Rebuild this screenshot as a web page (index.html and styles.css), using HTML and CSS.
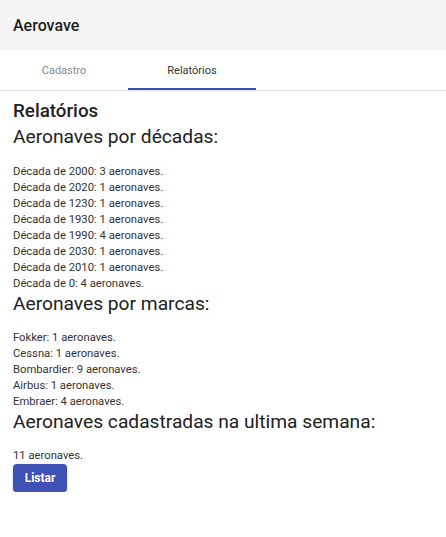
FILE: index.html
```html
<!DOCTYPE html>
<html lang="pt">
<head>
<meta charset="utf-8">
<title>Aerovave</title>
<link rel="stylesheet" href="styles.css">
</head>
<body>
<header class="topbar"><span class="brand">Aerovave</span></header>
<nav class="tabs">
  <div class="tab">Cadastro</div>
  <div class="tab active">Relatórios</div>
</nav>
<main class="content">
  <h1 class="title">Relatórios</h1>
  <h2 class="section">Aeronaves por décadas:</h2>
  <div class="list">
    <p>Década de 2000: 3 aeronaves.</p>
    <p>Década de 2020: 1 aeronaves.</p>
    <p>Década de 1230: 1 aeronaves.</p>
    <p>Década de 1930: 1 aeronaves.</p>
    <p>Década de 1990: 4 aeronaves.</p>
    <p>Década de 2030: 1 aeronaves.</p>
    <p>Década de 2010: 1 aeronaves.</p>
    <p>Década de 0: 4 aeronaves.</p>
  </div>
  <h2 class="section">Aeronaves por marcas:</h2>
  <div class="list">
    <p>Fokker: 1 aeronaves.</p>
    <p>Cessna: 1 aeronaves.</p>
    <p>Bombardier: 9 aeronaves.</p>
    <p>Airbus: 1 aeronaves.</p>
    <p>Embraer: 4 aeronaves.</p>
  </div>
  <h2 class="section">Aeronaves cadastradas na ultima semana:</h2>
  <div class="list">
    <p>11 aeronaves.</p>
  </div>
  <button class="btn">Listar</button>
</main>
</body>
</html>
```
FILE: styles.css
```css
html, body {
  margin: 0;
  padding: 0;
  background: #fff;
  font-family: Roboto, "Noto Sans", sans-serif;
  color: #212121;
}
.topbar {
  height: 50px;
  background: #f5f5f5;
  display: flex;
  align-items: center;
  padding-left: 13px;
}
.brand {
  font-size: 16px;
  font-weight: 500;
  color: #212121;
}
.tabs {
  display: flex;
  height: 40px;
  border-bottom: 1px solid #e0e0e0;
}
.tab {
  width: 128px;
  display: flex;
  align-items: center;
  justify-content: center;
  font-size: 11px;
  color: #8a8a8a;
  box-sizing: border-box;
  padding-top: 1px;
}
.tab.active {
  color: #333;
  border-bottom: 2px solid #3f51b5;
  padding-top: 3px;
}
.content {
  padding: 8px 13px 0;
}
.title {
  margin: 0;
  font-size: 18.8px;
  font-weight: 500;
  line-height: 24px;
}
.section {
  margin: 2px 0 14px;
  font-size: 19.2px;
  font-weight: 400;
  line-height: 24px;
  color: #212121;
}
.title + .section { margin-bottom: 15px; }
.list + .section { margin-top: 0; }
.list p {
  margin: 0;
  font-size: 11.25px;
  line-height: 16px;
  color: #333;
}
.btn {
  margin-top: 0;
  width: 54px;
  height: 28px;
  border: 0;
  border-radius: 4px;
  background: #3f51b5;
  color: #fff;
  font-family: Roboto, sans-serif;
  font-size: 12px;
  font-weight: 700;
  box-shadow: 0 2px 2px rgba(0,0,0,0.24), 0 0 2px rgba(0,0,0,0.12);
  padding: 0;
}
```
